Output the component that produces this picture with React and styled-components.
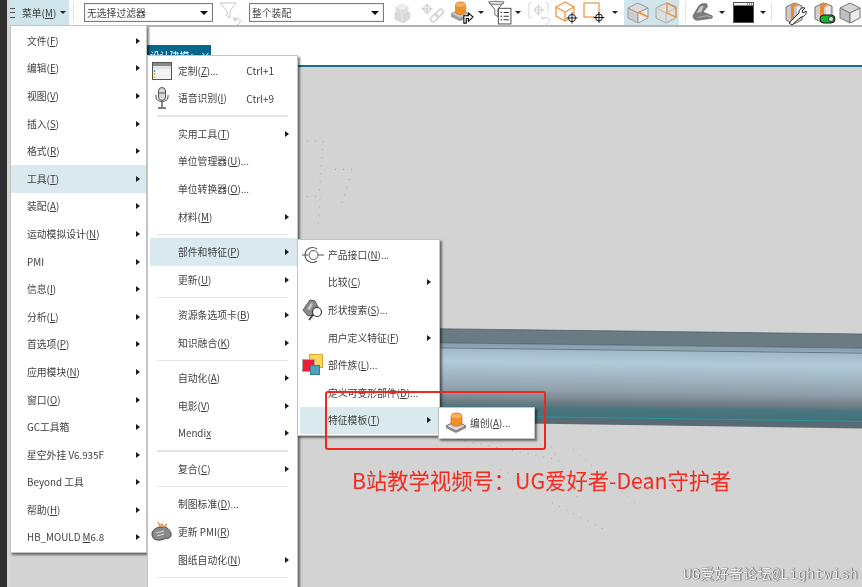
import React from "react";
import styled, { createGlobalStyle } from "styled-components";

const Global = createGlobalStyle`
  html, body { margin: 0; padding: 0; background: #fff; }
  body { font-family: "Noto Sans CJK SC", "Noto Sans", sans-serif; }
`;

const Page = styled.div`
  position: relative;
  width: 862px;
  height: 587px;
  overflow: hidden;
  display: flex;
  background: #fff;
  font-size: 9.8px;
  color: #3e3e3e;
  filter: blur(0.3px);
`;
const DarkStrip = styled.div`
  flex: 0 0 7px;
  background: #2f2f2f;
  border-right: 3px solid #d6d6d6;
`;
const Main = styled.div`
  flex: 1;
  min-width: 0;
  display: flex;
  flex-direction: column;
`;
const Toolbar = styled.div`
  flex: 0 0 25px;
  display: flex;
  align-items: stretch;
  border-bottom: 2px solid #b4b4b4;
  background: #fff;
`;
const MenuButton = styled.div`
  flex: 0 0 59px;
  display: flex;
  align-items: center;
  background: #cfe5eb;
  box-sizing: border-box;
`;
const Burger = styled.span`
  width: 5px;
  height: 8px;
  margin-right: 7px;
  border-top: 1px solid #555;
  border-bottom: 1px solid #555;
  position: relative;
  &::after { content: ""; position: absolute; left: 0; right: 0; top: 3.5px; height: 1px; background: #555; }
`;
const Caret = styled.span`
  display: inline-block;
  width: 0;
  height: 0;
  margin-left: ${p => p.$ml || 0}px;
  border-left: 3px solid transparent;
  border-right: 3px solid transparent;
  border-top: 3px solid #222;
`;
const ToolDivider = styled.div`
  flex: 0 0 1px;
  margin: 2px ${p => p.$r}px 3px ${p => p.$l}px;
  background: #e2e2e2;
`;
const Select = styled.div`
  flex: 0 0 ${p => p.$w}px;
  box-sizing: border-box;
  height: 19px;
  margin-top: 3px;
  padding: 0 4px 0 2px;
  display: flex;
  align-items: center;
  justify-content: space-between;
  border: 1px solid #7d7d7d;
  box-shadow: inset 0 0 0 1px #f0f0f0;
  color: #444;
  & > ${Caret} { border-top-width: 4px; border-left-width: 4px; border-right-width: 4px; border-top-color: #111; }
`;
const ToolSlot = styled.div`
  flex: 0 0 ${p => p.$w}px;
  display: flex;
  align-items: center;
  justify-content: center;
  background: ${p => (p.$on ? "#cfe5eb" : "transparent")};
`;
const TabBar = styled.div`
  flex: 0 0 40px;
  box-sizing: border-box;
  display: flex;
  align-items: flex-end;
  border-bottom: 2px solid #14708f;
  padding-left: 110px;
`;
const Tab = styled.div`
  width: 91px;
  height: 20px;
  box-sizing: border-box;
  background: #07668c;
  color: #fff;
  padding: 5px 5px 0 30px;
  line-height: 12px;
  display: flex;
  justify-content: space-between;
  white-space: nowrap;
`;
const TabControls = styled.span`
  letter-spacing: 6px;
`;
const Viewport = styled.div`
  flex: 1;
  position: relative;
  background: #d3d3d3;
`;
const Scene = styled.svg`
  position: absolute;
  inset: 0;
  width: 100%;
  height: 100%;
`;
const Menu = styled.div`
  position: absolute;
  left: ${p => p.$x}px;
  top: ${p => p.$y}px;
  width: ${p => p.$w}px;
  box-sizing: border-box;
  background: #fff;
  border: 1px solid #c4c4c4;
  padding: 1px 0 1px ${p => p.$inset || 0}px;
  box-shadow: 2px 2px 2px rgba(0, 0, 0, 0.5);
  z-index: ${p => p.$z};
`;
const Row = styled.div`
  height: 27.6px;
  display: grid;
  grid-template-columns: ${p => p.$icon}px 1fr auto ${p => p.$arrow}px;
  align-items: center;
  background: ${p => (p.$active ? "#d9e9ee" : "transparent")};
  white-space: nowrap;
  u { text-underline-offset: 1px; text-decoration-thickness: 1px; }
`;
const IconCell = styled.div`
  display: flex;
  align-items: center;
  justify-content: center;
  height: 27px;
  margin-left: ${p => p.$shift || 0}px;
`;
const Shortcut = styled.span`
  margin-right: 11px;
  font-size: 10px;
`;
const Arrow = styled.span`
  justify-self: start;
  width: 0;
  height: 0;
  border-top: 3.5px solid transparent;
  border-bottom: 3.5px solid transparent;
  border-left: 4px solid #1c1c1c;
`;
const Sep = styled.div`
  height: 7.9px;
  margin: 0 9px 0 7px;
  display: flex;
  align-items: center;
  &::before { content: ""; flex: 1; height: 1.5px; background: #e4e4e4; }
`;
const Callout = styled.div`
  position: absolute;
  left: 325px;
  top: 391px;
  width: 221px;
  height: 59px;
  box-sizing: border-box;
  border: 2.6px solid #f0271c;
  border-radius: 3px;
  z-index: 5;
`;
const Annotation = styled.div`
  position: absolute;
  left: 352px;
  top: 464px;
  font-size: 21.3px;
  line-height: 32px;
  color: #f4291e;
  white-space: nowrap;
  z-index: 5;
`;
const Watermark = styled.div`
  position: absolute;
  right: 4px;
  bottom: 2px;
  font-family: "Liberation Mono", "Noto Sans CJK SC", monospace;
  font-size: 14px;
  letter-spacing: 0.25px;
  line-height: 20px;
  color: #f6f6f6;
  text-shadow: 0 0 1px #444, 1px 0 1px #666;
  white-space: nowrap;
  z-index: 5;
`;

const Text = ({ t }) => {
  const [head, tail] = t.split("|");
  return (
    <span>
      {head}
      {tail !== undefined && (
        <>
          <u>{tail[0]}</u>
          {tail.slice(1)}
        </>
      )}
    </span>
  );
};

const Ico = ({ w = 24, h = 24, vb = "0 0 24 24", children }) => (
  <svg width={w} height={h} viewBox={vb} fill="none">{children}</svg>
);

const Target = ({ x, y, r = 3.6, c = "#333" }) => (
  <g stroke={c} strokeWidth="1">
    <circle cx={x} cy={y} r={r} />
    <path d={`M${x - r - 2} ${y}H${x + r + 2}M${x} ${y - r - 2}V${y + r + 2}`} />
  </g>
);

const Tools = {
  stack: (
    <Ico w={22} h={22}>
      <path d="M12 1l7 3.5-7 3.5-7-3.5z" fill="#ececec" />
      <path d="M5 5l7 3.5V13l-7-3.5zM19 5v4.5L12 13V8.5z" fill="#dedede" />
      <path d="M6 10l6 3 6-3 3 1.5v7L14 23l-4-1-6-3v-7.5z" fill="#d9d9d9" />
      <path d="M12 13v9" stroke="#eee" />
    </Ico>
  ),
  link: (
    <Ico w={26} h={24}>
      <Target x={8} y={8} r={3.5} c="#c4c4c4" />
      <g stroke="#d2d2d2" strokeWidth="1.5">
        <rect x="11" y="14.5" width="9" height="5" rx="2.5" transform="rotate(-45 15.5 17)" />
        <rect x="16" y="9.5" width="9" height="5" rx="2.5" transform="rotate(-45 20.5 12)" />
      </g>
    </Ico>
  ),
  db: (
    <Ico w={24} h={23} vb="0 0 26 25">
      <path d="M1 14l10-5 10 5-10 5z" fill="#c9c9c9" stroke="#777" strokeWidth=".7" />
      <path d="M1 14v3l10 5 10-5v-3l-10 5z" fill="#9b9b9b" />
      <path d="M6 4c0-4 11-4 11 0v8c0 4-11 4-11 0z" fill="#f0902a" stroke="#c86a10" strokeWidth=".6" />
      <ellipse cx="11.5" cy="4" rx="5.5" ry="2.2" fill="#f8b25c" />
      <path d="M15 24v-8h5v-3l5 4.5-5 4.5v-3h-2.4v5z" fill="#fff" stroke="#111" strokeWidth="1.2" />
    </Ico>
  ),
  funnelList: (
    <Ico w={27} h={25}>
      <path d="M1 2h14l-5.5 7v7l-3-2V9z" fill="#fff" stroke="#777" />
      <ellipse cx="8" cy="2.6" rx="7" ry="1.5" fill="#e8e8e8" stroke="#777" />
      <rect x="10" y="8" width="12" height="15" fill="#fff" stroke="#555" />
      <path d="M12 12h1.5M15 12h5M12 15.5h1.5M15 15.5h5M12 19h1.5M15 19h5" stroke="#333" />
    </Ico>
  ),
  disabledTarget: (
    <Ico w={24} h={24}>
      <path d="M5 2H2v15h3M18 2h3v9" stroke="#d6d6d6" />
      <Target x={11.5} y={9} r={3.5} c="#cfcfcf" />
      <path d="M15 18c3-3 8-2 7 2s-3 3-4 3M15 18v-3M15 18h3" stroke="#d0d0d0" />
    </Ico>
  ),
  orangeCube: (
    <Ico w={24} h={24}>
      <path d="M1 6l9-5 9 5v9l-9 5-9-5zM1 6l9 5 9-5M10 11v9" stroke="#f0963c" strokeWidth="1.3" />
      <circle cx="17" cy="17" r="4" fill="#fff" />
      <Target x={17} y={17} r={3.6} c="#222" />
    </Ico>
  ),
  orangeSquare: (
    <Ico w={24} h={24}>
      <rect x="1" y="2" width="15" height="14" fill="#fff" stroke="#f09a48" strokeWidth="1.3" />
      <circle cx="16" cy="16.5" r="4" fill="#fff" />
      <Target x={16} y={16.5} r={3.4} c="#111" />
    </Ico>
  ),
  viewA: (
    <Ico w={24} h={24}>
      <path d="M12 2l10 5-10 5L2 7z" fill="#dcdcdc" stroke="#9b9b9b" />
      <path d="M2 7l10 5v10L2 17z" fill="#cdcdcd" stroke="#9b9b9b" />
      <path d="M22 7v10l-10 5V12z" fill="#ededed" stroke="#9b9b9b" />
      <path d="M12 11l10 5" stroke="#ef8b2c" strokeWidth="1.6" />
    </Ico>
  ),
  viewB: (
    <Ico w={24} h={24}>
      <path d="M12 2l10 5v10l-10 5L2 17V7z" fill="#dedede" stroke="#a5a5a5" />
      <path d="M2 7l10 5 10-5M12 12v10" stroke="#bbb" />
      <path d="M13 2l9 4v10l-9-4z" stroke="#ef8b2c" strokeWidth="1.2" />
    </Ico>
  ),
  shape: (
    <Ico w={24} h={22}>
      <path d="M1 15l6-10c1-3 6-4 9-3l1 3-5 6 10 4c1 2 0 3-2 3l-14 2c-3 0-5-2-5-5z" fill="#7c7c7c" stroke="#555" strokeWidth=".6" />
      <path d="M5 12l4-7 4-1-3 7z" fill="#c6c6c6" />
      <path d="M6 17l10-2 5 1" stroke="#b8b8b8" />
    </Ico>
  ),
  blackWin: (
    <svg width="21" height="21" viewBox="0 0 21 21">
      <rect x=".5" y=".5" width="20" height="20" fill="#000" stroke="#555" />
      <rect x="1" y="1" width="19" height="2.5" fill="#f2f2f2" />
      <path d="M14 2h1M16 2h1M18 2h1" stroke="#333" />
    </svg>
  ),
  wrench: (
    <Ico w={24} h={24}>
      <path d="M3 6l8-4 8 3v14l-8 4-8-4z" fill="#c9c9c9" stroke="#777" />
      <path d="M8 4l5-2 3 1-5 3v13l-3 2z" fill="#e88a2e" />
      <path d="M14 6l3-1v8l-3 1z" fill="#eee" />
      <path d="M6 22l10-10c0-4 3-6 6-5l-3 3 1 2 3-2c1 3-2 6-5 6L9 24z" fill="#fff" stroke="#222" strokeWidth="1" />
    </Ico>
  ),
  toggle: (
    <Ico w={24} h={24}>
      <path d="M3 6l8-4 9 3v13l-9 4-8-4z" fill="#d0d0d0" stroke="#777" />
      <path d="M8 4l6-2 3 1-5 3v14l-4-2z" fill="#e88a2e" />
      <path d="M14 6l4-1v10l-4 1z" fill="#eee" />
      <rect x="8" y="14" width="15" height="8" rx="4" fill="#17b52f" stroke="#111" />
      <circle cx="19" cy="18" r="2.5" fill="#ddd" stroke="#111" strokeWidth=".7" />
    </Ico>
  ),
  cube: (
    <Ico w={24} h={24}>
      <path d="M12 2l10 5-10 5L2 7z" fill="#d6d6d6" stroke="#777" />
      <path d="M2 7l10 5v10L2 17z" fill="#c0c0c0" stroke="#777" />
      <path d="M22 7v10l-10 5V12z" fill="#ececec" stroke="#777" />
    </Ico>
  ),
  funnelUndo: (
    <Ico w={24} h={24}>
      <path d="M1 2h16l-6 8v7l-3-2v-5z" fill="#fff" stroke="#c8c8c8" />
      <path d="M15 19c2-3 7-2 6 2s-3 2-3 2M15 19v-3M15 19h3" stroke="#c4c4c4" />
    </Ico>
  ),
};

const Icons = {
  window: (
    <svg width="20" height="18" viewBox="0 0 20 18">
      <rect x=".5" y=".5" width="19" height="17" fill="#f3f3f3" stroke="#555" />
      <rect x="1" y="1" width="18" height="3" fill="#8a8a8a" />
      <rect x="1" y="4" width="18" height="3" fill="#e2e2e2" />
      <path d="M2.5 8v2" stroke="#4aa7d8" strokeWidth="1.5" />
      <path d="M2.5 11v2" stroke="#f0a030" strokeWidth="1.5" />
      <path d="M2.5 14v2" stroke="#d0c040" strokeWidth="1.5" />
    </svg>
  ),
  mic: (
    <svg width="14" height="22" viewBox="0 0 14 22" fill="none">
      <rect x="3.5" y=".5" width="7" height="13" rx="3.5" fill="#d8d8d8" stroke="#555" />
      <path d="M3.5 6h7" stroke="#555" />
      <path d="M1 8v2c0 6 12 6 12 0V8" stroke="#666" strokeWidth="1.2" />
      <path d="M7 15v5M3 21h8" stroke="#555" strokeWidth="1.4" />
    </svg>
  ),
  pmi: (
    <svg width="22" height="22" viewBox="0 0 22 22" fill="none">
      <path d="M1 13c0-4 4-6 7-7l6 0c3 1 7 5 6 9-1 3-5 2-7 3-4 2-12 2-12-5z" fill="#8a8a8a" stroke="#444" />
      <path d="M5 12l8-2M6 15l7-2" stroke="#ddd" />
      <path d="M7 1l2 4 2-2 2 3 3-3" stroke="#ef8b2c" strokeWidth="1.3" />
    </svg>
  ),
  port: (
    <svg width="22" height="18" viewBox="0 0 22 18" fill="none" stroke="#555">
      <path d="M0 9h6M16 9h6" />
      <path d="M15 3a7.5 7.5 0 1 0 0 12" strokeWidth="1.1" />
      <circle cx="11.5" cy="9" r="4.5" />
    </svg>
  ),
  shapeSearch: (
    <svg width="22" height="22" viewBox="0 0 22 22" fill="none">
      <path d="M1 11L8 1l5 1 3 6-4 8-6 1z" fill="#8b8b8b" stroke="#555" />
      <path d="M5 10l4-6 2 1-3 6z" fill="#c8c8c8" />
      <circle cx="15" cy="13" r="4.5" fill="#fff" stroke="#333" strokeWidth="1.2" />
      <path d="M11 16l-4 5" stroke="#333" strokeWidth="1.6" />
    </svg>
  ),
  family: (
    <svg width="22" height="22" viewBox="0 0 22 22">
      <rect x="7.5" y=".5" width="13" height="13" fill="#fbd75e" stroke="#d9a72c" />
      <rect x=".5" y="5.5" width="12" height="12" fill="#ee1c36" stroke="#a5a5a5" />
      <rect x="8.5" y="11.5" width="9" height="9" fill="#549fb8" stroke="#2d7f99" />
    </svg>
  ),
  create: (
    <svg width="22" height="22" viewBox="0 0 22 22" fill="none">
      <path d="M1 14l10-5 10 5-10 5z" fill="#dcdcdc" stroke="#666" />
      <path d="M1 14v2l10 5 10-5v-2l-10 5z" fill="#888" />
      <path d="M6 4c0-4 11-4 11 0v8c0 3-11 3-11 0z" fill="#f0902a" stroke="#c46a12" strokeWidth=".6" />
      <ellipse cx="11.5" cy="4" rx="5.5" ry="2.2" fill="#f9b25a" />
    </svg>
  ),
  last: (
    <svg width="12" height="14" viewBox="0 0 12 14" fill="none" stroke="#444">
      <path d="M1 1h10M3 3h6M1 5h10" />
    </svg>
  ),
};

const menu1 = [
  "文件(|F)", "编辑(|E)", "视图(|V)", "插入(|S)", "格式(|R)", "工具(|T)", "装配(|A)", "运动模拟设计(|N)", "PMI",
  "信息(|I)", "分析(|L)", "首选项(|P)", "应用模块(|N)", "窗口(|O)", "GC工具箱", "星空外挂 V6.935F", "Beyond 工具", "帮助(|H)", "HB_MOULD |M6.8",
];

const menu2 = [
  { t: "定制(|Z)...", i: "window", k: "Ctrl+1" },
  { t: "语音识别(|I)", i: "mic", k: "Ctrl+9" },
  "sep",
  { t: "实用工具(|T)", a: 1 },
  { t: "单位管理器(|U)..." },
  { t: "单位转换器(|O)..." },
  { t: "材料(|M)", a: 1 },
  "sep",
  { t: "部件和特征(|P)", a: 1, on: 1 },
  { t: "更新(|U)", a: 1 },
  "sep",
  { t: "资源条选项卡(|B)", a: 1 },
  { t: "知识融合(|K)", a: 1 },
  "sep",
  { t: "自动化(|A)", a: 1 },
  { t: "电影(|V)", a: 1 },
  { t: "Mendi|x", a: 1 },
  "sep",
  { t: "复合(|C)", a: 1 },
  "sep",
  { t: "制图标准(|D)..." },
  { t: "更新 PMI(|R)", i: "pmi" },
  { t: "图纸自动化(|N)", a: 1 },
  "sep",
  { t: "", i: "last" },
];

const menu3 = [
  { t: "产品接口(|N)...", i: "port" },
  { t: "比较(|C)", a: 1 },
  { t: "形状搜索(|S)...", i: "shapeSearch" },
  { t: "用户定义特征(|F)", a: 1 },
  { t: "部件族(|L)...", i: "family" },
  { t: "定义可变形部件(|D)..." },
  { t: "特征模板(|T)", a: 1, on: 1 },
];

const toolStrip = [
  { w: 5 },
  { w: 26, i: "stack" }, { w: 32, i: "link" }, { w: 30, i: "db" }, { w: 8, c: 1 }, { w: 2 },
  { w: 27, i: "funnelList" }, { w: 8, c: 1 }, { w: 2 }, { w: 29, i: "disabledTarget" },
  { w: 28, i: "orangeCube" }, { w: 28, i: "orangeSquare" }, { w: 12, c: 1 }, { w: 3 },
  { w: 28, i: "viewA", on: 1 }, { w: 27, i: "viewB", on: 1 }, "div",
  { w: 28, i: "shape" }, { w: 10, c: 1 }, { w: 2 }, { w: 28, i: "blackWin" }, { w: 11, c: 1 }, "div2",
  { w: 31, i: "wrench" }, { w: 28, i: "toggle" }, { w: 24, i: "cube" },
];

const renderRows = (rows, icon, shift) =>
  rows.map((r, n) =>
    r === "sep" ? (
      <Sep key={n} />
    ) : (
      <Row key={n} $icon={icon} $arrow={12} $active={r.on}>
        <IconCell $shift={shift}>{r.i && Icons[r.i]}</IconCell>
        <Text t={r.t} />
        {r.k ? <Shortcut>{r.k}</Shortcut> : <span />}
        {r.a ? <Arrow /> : <span />}
      </Row>
    )
  );

const Dots = () => (
  <g stroke="#9a9a9a" strokeWidth=".8" strokeDasharray="1 7" fill="none">
    <path d="M307 143h16M323 143l-2 30 -2 25M307 198h16M320 200l-2 30M335 171h17M352 173l-12 37" />
    <path d="M457 440l60 12 40 8M551 447l29 56M573 450l62 53M552 503l55 28M500 470l40 20" />
  </g>
);

export default function App() {
  return (
    <Page>
      <Global />
      <DarkStrip />
      <Main>
        <Toolbar>
          <MenuButton>
            <Burger />
            <span>菜单(<u>M</u>)</span>
            <Caret $ml={4} />
          </MenuButton>
          <ToolDivider $l={4} $r={10} />
          <Select $w={129}>无选择过滤器<Caret /></Select>
          <ToolSlot $w={36}>{Tools.funnelUndo}</ToolSlot>
          <Select $w={135}>整个装配<Caret /></Select>
          {toolStrip.map((s, n) =>
            s === "div" ? (
              <ToolDivider key={n} $l={6} $r={3} />
            ) : s === "div2" ? (
              <ToolDivider key={n} $l={3} $r={7} />
            ) : (
              <ToolSlot key={n} $w={s.w} $on={s.on}>
                {s.i && Tools[s.i]}
                {s.c && <Caret />}
              </ToolSlot>
            )
          )}
        </Toolbar>
        <TabBar>
          <Tab><span>设计建模</span><TabControls>+×</TabControls></Tab>
        </TabBar>
        <Viewport>
          <Scene viewBox="10 69 852 518" preserveAspectRatio="none">
            <polygon points="298,328 862,335 862,349 298,342" fill="#6a7b83" />
            <polygon points="298,342 862,349 862,354 298,347" fill="#8ba2b2" />
            <defs>
              <linearGradient id="body" gradientUnits="userSpaceOnUse" x1="580" y1="349" x2="579" y2="428">
                <stop offset="0" stopColor="#9db4c4" />
                <stop offset=".18" stopColor="#b3cbd9" />
                <stop offset=".55" stopColor="#8e9ea9" />
                <stop offset=".7" stopColor="#6c7a82" />
                <stop offset=".76" stopColor="#47767e" />
                <stop offset=".88" stopColor="#47717a" />
                <stop offset=".9" stopColor="#5a6a72" />
                <stop offset="1" stopColor="#5c6b73" />
              </linearGradient>
            </defs>
            <polygon points="298,346 862,353 862,429 298,421" fill="url(#body)" />
            <path d="M298 328L862 335M298 342L862 349M298 347L862 354" stroke="#4b5a62" strokeWidth=".7" />
            <path d="M440 416L862 422" stroke="#1f9ea0" strokeWidth=".9" />
            <Dots />
          </Scene>
          <Watermark>UG爱好者论坛@Lightwish</Watermark>
        </Viewport>
      </Main>

      <Menu $x={10} $y={25} $w={137} $z={2}>
        {menu1.map((t, n) => (
          <Row key={n} $icon={16} $arrow={10} $active={t.startsWith("工具")}>
            <span />
            <Text t={t} />
            <span />
            <Arrow />
          </Row>
        ))}
      </Menu>
      <Menu $x={147} $y={55} $w={151} $inset={2} $z={3}>
        {renderRows(menu2, 28, -4)}
      </Menu>
      <Menu $x={297} $y={239} $w={143} $inset={2} $z={4}>
        {renderRows(menu3, 28, -3)}
      </Menu>
      <Menu $x={438} $y={407} $w={97} $inset={2} $z={4}>
        {renderRows([{ t: "编创(|A)...", i: "create" }], 29, 0)}
      </Menu>
      <Callout />
      <Annotation>B站教学视频号：UG爱好者-Dean守护者</Annotation>
    </Page>
  );
}
